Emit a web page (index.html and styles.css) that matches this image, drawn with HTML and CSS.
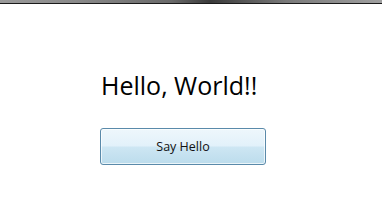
FILE: index.html
```
<!DOCTYPE html>
<html>
<head>
<meta charset="utf-8">
<link rel="stylesheet" href="styles.css">
</head>
<body>
<div class="frame"></div>
<div class="content">
  <div class="title">Hello, World!!</div>
  <button class="btn">Say Hello</button>
</div>
</body>
</html>
```
FILE: styles.css
```
html, body {
  margin: 0;
  padding: 0;
  background: #ffffff;
  width: 382px;
  height: 207px;
  overflow: hidden;
  font-family: "Open Sans", "Noto Sans", sans-serif;
}
.frame {
  height: 3px;
  background: linear-gradient(to right, #9a9a9a 0%, #8a8a8a 20%, #6a6a6a 45%, #3a3a3a 55%, #7a7a7a 75%, #a0a0a0 100%);
  border-bottom: 1px solid #1a1a1a;
}
.content {
  display: flex;
  flex-direction: column;
  align-items: flex-start;
  padding-left: 100px;
  padding-top: 64px;
}
.title {
  font-size: 25px;
  line-height: 34px;
  color: #000;
  padding-left: 1px;
}
.btn {
  margin-top: 26px;
  width: 166px;
  height: 37px;
  border: 1px solid #5a8aaa;
  border-radius: 3px;
  background: linear-gradient(to bottom, #eef7fc 0%, #e2f1fa 48%, #cde6f3 52%, #bcdcec 100%);
  box-shadow: inset 0 0 0 1px rgba(255,255,255,0.7);
  font-family: "Open Sans", "Noto Sans", sans-serif;
  font-size: 12.5px;
  color: #111;
  padding: 0;
}
```
